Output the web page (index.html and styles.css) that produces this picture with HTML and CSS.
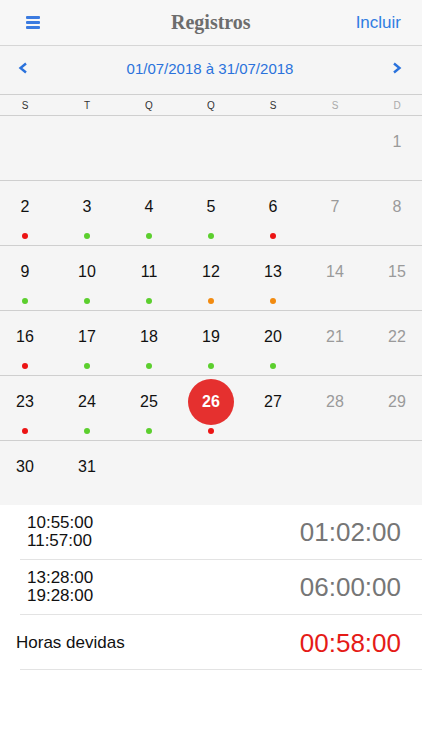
FILE: index.html
```html
<!DOCTYPE html>
<html lang="pt">
<head>
  <meta charset="UTF-8" />
  <title>Registros</title>
  <link rel="stylesheet" href="styles.css">
</head>
<body>

  <!-- Barra superior -->
  <header class="topbar">
    <span class="menu-icon">
      <svg width="14" height="13" viewBox="0 0 14 13">
        <rect x="0" y="0" width="14" height="3" rx="1" fill="#3b7be0" />
        <rect x="0" y="5" width="14" height="3" rx="1" fill="#3b7be0" />
        <rect x="0" y="10" width="14" height="3" rx="1" fill="#3b7be0" />
      </svg>
    </span>
    <h1>Registros</h1>
    <a href="#" class="add-link">Incluir</a>
  </header>

  <!-- Periodo -->
  <div class="period">
    <svg class="arrow" width="10" height="12" viewBox="0 0 10 12">
      <path d="M8 1.5 L2.5 6 L8 10.5" fill="none" stroke="#2a72dc" stroke-width="2.4" />
    </svg>
    <span class="period-text">01/07/2018 à 31/07/2018</span>
    <svg class="arrow" width="10" height="12" viewBox="0 0 10 12">
      <path d="M2 1.5 L7.5 6 L2 10.5" fill="none" stroke="#2a72dc" stroke-width="2.4" />
    </svg>
  </div>

  <!-- Calendario -->
  <div class="weekdays">
    <span>S</span><span>T</span><span>Q</span><span>Q</span><span>S</span>
    <span class="weekend">S</span><span class="weekend">D</span>
  </div>

  <section class="calendar" id="calendar"></section>

  <!-- Lista de registros -->
  <section class="records">
    <div class="record">
      <div class="times"><div>10:55:00</div><div>11:57:00</div></div>
      <div class="total">01:02:00</div>
    </div>
    <div class="record">
      <div class="times"><div>13:28:00</div><div>19:28:00</div></div>
      <div class="total">06:00:00</div>
    </div>
    <div class="record summary">
      <div class="label">Horas devidas</div>
      <div class="total owed">00:58:00</div>
    </div>
  </section>

  <script>
    // dias de julho/2018, começa no domingo
    const marks = {
      2: "red", 3: "green", 4: "green", 5: "green", 6: "red",
      9: "green", 10: "green", 11: "green", 12: "orange", 13: "orange",
      16: "red", 17: "green", 18: "green", 19: "green", 20: "green",
      23: "red", 24: "green", 25: "green", 26: "red"
    };
    const today = 26;
    const calendar = document.getElementById("calendar");

    const cells = [];
    for (let i = 0; i < 6; i++) cells.push(null);
    for (let d = 1; d <= 31; d++) cells.push(d);
    while (cells.length % 7) cells.push(null);

    for (let w = 0; w < cells.length / 7; w++) {
      const week = document.createElement("div");
      week.className = "week";
      for (let c = 0; c < 7; c++) {
        const day = cells[w * 7 + c];
        const cell = document.createElement("div");
        cell.className = "day";
        if (day) {
          const num = document.createElement("span");
          num.className = "num";
          if (c >= 5) num.classList.add("weekend");
          if (day === today) num.classList.add("today");
          num.textContent = day;
          cell.appendChild(num);
          const dot = document.createElement("span");
          dot.className = "dot";
          if (marks[day]) dot.classList.add(marks[day]);
          cell.appendChild(dot);
        }
        week.appendChild(cell);
      }
      calendar.appendChild(week);
    }
  </script>

</body>
</html>
```

FILE: styles.css
```css
body {
  margin: 0;
  font-family: "Liberation Sans", Arial, sans-serif;
  background-color: #ffffff;
  color: #111;
}

/* Barra superior */
.topbar {
  height: 45px;
  display: flex;
  align-items: center;
  justify-content: space-between;
  padding: 0 21px 0 26px;
  background-color: #f7f7f7;
  border-bottom: 1px solid #d6d6d6;
}

.menu-icon {
  width: 40px;
  display: flex;
}

.topbar h1 {
  margin: 0;
  font-family: "Liberation Serif", "DejaVu Serif", serif;
  font-size: 20px;
  font-weight: 700;
  color: #6d6d6d;
}

.add-link {
  color: #2f7de2;
  text-decoration: none;
  font-size: 17px;
}

/* Periodo */
.period {
  height: 44px;
  padding: 0 20px 4px 18px;
  display: flex;
  align-items: center;
  justify-content: space-between;
  background-color: #f5f5f5;
  border-bottom: 1px solid #cfcfcf;
  color: #2a72dc;
}

.period-text {
  font-size: 15px;
}

/* Calendario */
.weekdays,
.week {
  display: grid;
  grid-template-columns: repeat(7, 62px);
  justify-content: center;
}

.weekdays {
  height: 20px;
  align-items: center;
  background-color: #f5f5f5;
  border-bottom: 1px solid #cfcfcf;
  font-size: 10px;
  color: #333;
  text-align: center;
}

.weekdays .weekend {
  color: #aaa;
}

.calendar {
  background-color: #f5f5f5;
}

.week {
  height: 64px;
  border-bottom: 1px solid #cfcfcf;
}

.week:last-child {
  border-bottom: none;
}

.day {
  display: flex;
  flex-direction: column;
  align-items: center;
}

.num {
  width: 46px;
  height: 46px;
  margin-top: 3px;
  border-radius: 50%;
  display: flex;
  align-items: center;
  justify-content: center;
  font-size: 16px;
  color: #111;
}

.num.weekend {
  color: #9a9a9a;
}

.num.today {
  background-color: #e5302f;
  color: #fff;
  font-weight: 700;
}

.dot {
  width: 6px;
  height: 6px;
  margin-top: 3px;
  border-radius: 50%;
}

.dot.red { background-color: #ec1414; }
.dot.green { background-color: #5ccf2e; }
.dot.orange { background-color: #f28b10; }

/* Lista de registros */
.records {
  background-color: #fff;
  padding-left: 20px;
}

.record {
  height: 54px;
  display: flex;
  align-items: center;
  justify-content: space-between;
  padding: 0 21px 0 7px;
  border-bottom: 1px solid #e3e3e3;
}

.times {
  font-size: 17px;
  line-height: 18px;
}

.total {
  font-size: 26px;
  color: #767676;
}

.summary {
  padding-top: 2px;
  height: 52px;
}

.label {
  margin-left: -11px;
  font-size: 17px;
}

.total.owed {
  color: #e51b17;
}
```
